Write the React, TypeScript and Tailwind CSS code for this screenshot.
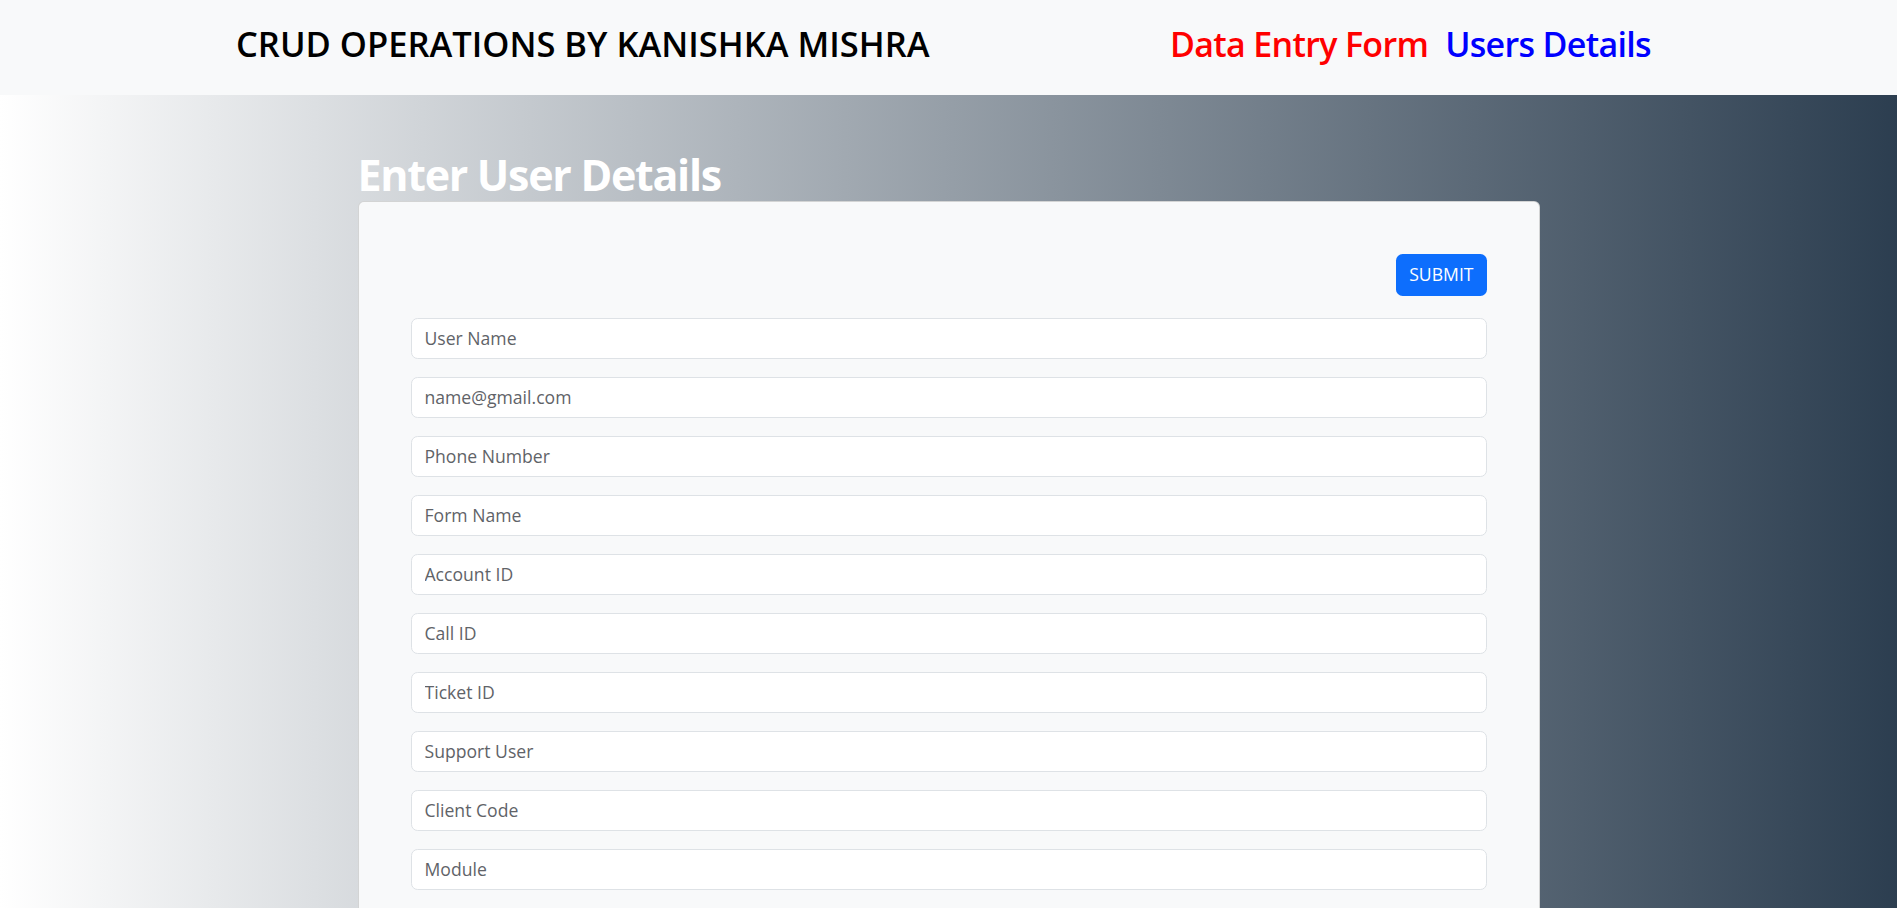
import React from 'react';

const fields = [
  'User Name',
  'name@gmail.com',
  'Phone Number',
  'Form Name',
  'Account ID',
  'Call ID',
  'Ticket ID',
  'Support User',
  'Client Code',
  'Module',
];

function Header() {
  return (
    <nav className="h-[95px] bg-[#f8f9fa] flex items-center pb-[7px] pl-[236px]">
      <div className="w-[934px]">
        <h2 className="text-[34.5px] font-semibold text-black leading-[1.2] whitespace-nowrap">
          CRUD OPERATIONS BY KANISHKA MISHRA
        </h2>
      </div>
      <div className="flex items-center gap-[17px] text-[34px] font-semibold leading-[1.2] tracking-[-0.02em] whitespace-nowrap">
        <a href="#" className="text-[#ff0000]">Data Entry Form</a>
        <a href="#" className="text-[#0000ff]">Users Details</a>
      </div>
    </nav>
  );
}

export default function App() {
  return (
    <div className="min-h-screen font-['Open_Sans',sans-serif] bg-[linear-gradient(to_right,#ffffff,#2c3e50)]">
      <Header />
      <div className="w-[1182px] mx-auto pt-[54px]">
        <h1 className="text-[43px] font-bold text-white leading-[1.2] tracking-[-0.03em]">Enter User Details</h1>
        <div className="bg-[#f8f9fa] border border-black/15 rounded-[6px] px-[52px] pt-[52px] pb-[120px]">
          <div className="flex justify-end mb-[22px]">
            <button className="h-[42px] px-[13px] rounded-[6.6px] bg-[#0d6efd] text-white text-[17.6px] leading-none">
              SUBMIT
            </button>
          </div>
          <form className="flex flex-col gap-[18px]">
            {fields.map((f) => (
              <input
                key={f}
                placeholder={f}
                className="h-[41px] w-full bg-white border border-[#dee2e6] rounded-[6.6px] px-[13px] text-[17.6px] text-[#212529] placeholder:text-[#5f6368] outline-none"
              />
            ))}
          </form>
        </div>
      </div>
    </div>
  );
}
